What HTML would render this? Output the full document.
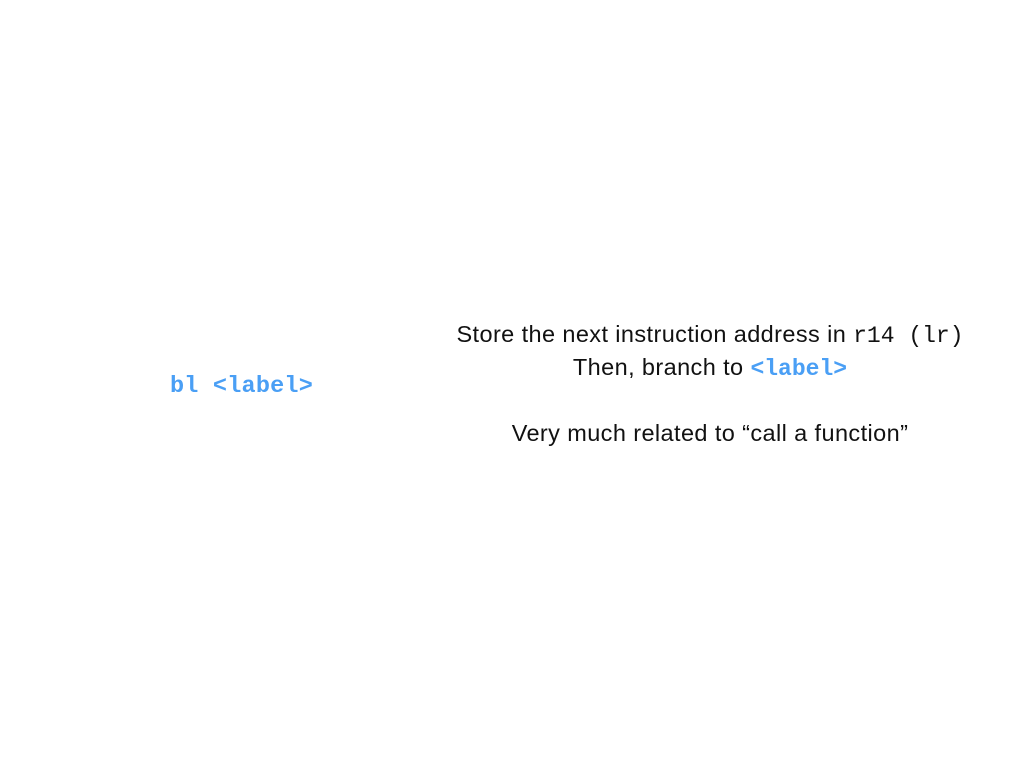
<!DOCTYPE html>
<html><head><style>
body{margin:0;width:1024px;height:768px;background:#fff;position:relative;overflow:hidden}
.t{position:absolute;left:360px;width:700px;text-align:center;font-family:"Liberation Sans",sans-serif;font-size:23.5px;color:#111;line-height:1;white-space:nowrap;letter-spacing:0.4px}
.m{font-family:"Liberation Mono",monospace;font-size:23px;letter-spacing:0px}
.b{color:#4a9ff5;font-weight:bold}
</style></head><body>
<div class="m b" style="position:absolute;left:170px;top:373px;font-size:23.5px;letter-spacing:0.2px">bl &lt;label&gt;</div>
<div class="t" style="top:323px">Store the next instruction address in <span class="m">r14 (lr)</span></div>
<div class="t" style="top:356px">Then, branch to <span class="m b">&lt;label&gt;</span></div>
<div class="t" style="top:422px">Very much related to “call a function”</div>
</body></html>
